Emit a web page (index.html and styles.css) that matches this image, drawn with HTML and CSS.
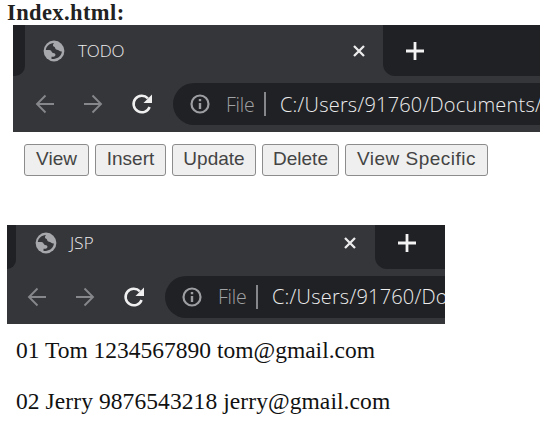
FILE: index.html
```
<!DOCTYPE html>
<html lang="en">
<head>
<meta charset="utf-8">
<title>Index.html</title>
<link rel="stylesheet" href="styles.css">
</head>
<body>
<svg class="defs" width="0" height="0">
  <symbol id="globe" viewBox="0 0 22 22"><circle cx="11" cy="11" r="10.400" fill="#a6a8ab"/><path d="M2.800 10C3.300 6 6.500 3.200 11 2.900 9.500 4.500 9.600 6.300 11.200 6.800c1.200.4.800 2.200 2 2.800 1.200.5 2.200.3 3 1.200.7.7 1.600.8 2.700.7-.4 3.800-3.500 7-7.900 7.400H8.500v-2.200c1.500.2 3.500 0 3.900-1.400.4-1.500-1-2-2.400-2.200-1.500-.3-1.200-2.300-2.700-2.800-1.300-.5-3-.3-4.500-.3z" fill="#35363a"/></symbol>
  <symbol id="back" viewBox="0 0 20 20"><path d="M19 10H2M10.500 1.500 2 10l8.500 8.500" fill="none" stroke="#85878a" stroke-width="1.900"/></symbol>
  <symbol id="forward" viewBox="0 0 20 20"><path d="M1 10h17M9.500 1.500 18 10l-8.500 8.500" fill="none" stroke="#85878a" stroke-width="1.900"/></symbol>
  <symbol id="reload" viewBox="0 0 22 22"><path d="M18.600 14a8.300 8.300 0 1 1-1.700-8.700" fill="none" stroke="#f0f0f1" stroke-width="2.500"/><path d="M21 1.500V10h-8.500z" fill="#f0f0f1"/></symbol>
  <symbol id="info" viewBox="0 0 20 20"><circle cx="10" cy="10" r="8.500" fill="none" stroke="#9c9ea1" stroke-width="2.200"/><path d="M10 9v6M10 5v2.200" stroke="#9c9ea1" stroke-width="2.400"/></symbol>
  <symbol id="close" viewBox="0 0 12 12"><path d="m1 1 10 10M11 1 1 11" stroke="#ececed" stroke-width="2.300"/></symbol>
  <symbol id="plus" viewBox="0 0 18 18"><path d="M9 0v18M0 9h18" stroke="#f3f3f3" stroke-width="2.800"/></symbol>
</svg>
<h1 class="heading">Index.html:</h1>
<section class="browser browser-index">
  <div class="tabs">
    <div class="strip-left"></div>
    <div class="tab"><svg class="globe"><use href="#globe"/></svg><span class="title">TODO</span><svg class="close"><use href="#close"/></svg></div>
    <div class="strip-right"><svg class="plus"><use href="#plus"/></svg></div>
  </div>
  <div class="toolbar">
    <svg class="arrow"><use href="#back"/></svg><svg class="arrow"><use href="#forward"/></svg><svg class="reload"><use href="#reload"/></svg>
    <div class="address"><svg class="info"><use href="#info"/></svg><span class="scheme">File</span><i class="divider"></i><span class="url">C:/Users/91760/Documents/</span></div>
  </div>
</section>
<div class="actions">
  <button class="view">View</button><button class="insert">Insert</button><button class="update">Update</button><button class="delete">Delete</button><button class="specific">View Specific</button>
</div>
<section class="browser browser-jsp">
  <div class="tabs">
    <div class="strip-left"></div>
    <div class="tab"><svg class="globe"><use href="#globe"/></svg><span class="title">JSP</span><svg class="close"><use href="#close"/></svg></div>
    <div class="strip-right"><svg class="plus"><use href="#plus"/></svg></div>
  </div>
  <div class="toolbar">
    <svg class="arrow"><use href="#back"/></svg><svg class="arrow"><use href="#forward"/></svg><svg class="reload"><use href="#reload"/></svg>
    <div class="address"><svg class="info"><use href="#info"/></svg><span class="scheme">File</span><i class="divider"></i><span class="url">C:/Users/91760/Do</span></div>
  </div>
</section>
<div class="records">
  <p class="tom">01 Tom 1234567890 tom@gmail.com</p>
  <p class="jerry">02 Jerry 9876543218 jerry@gmail.com</p>
</div>
</body>
</html>
```
FILE: styles.css
```
* { box-sizing: border-box; }
body { margin: 0; height: 426px; overflow: hidden; background: #fff; color: #111; }
.defs { display: block; }
svg { flex: none; }
.heading { margin: 0; padding: 1px 0 0 7px; height: 25px; font: bold 22.500px/23px "Liberation Serif", serif; color: #222; letter-spacing: .4px; }

.browser { display: flex; flex-direction: column; overflow: hidden; background: #35363a; font-family: "Open Sans", sans-serif; font-weight: 300; color: #ededee; white-space: nowrap; }
.browser-index { width: 527px; height: 107px; margin-left: 13px; }
.browser-jsp { width: 438px; height: 99px; margin-left: 7px; }
.tabs { display: flex; background: #35363a; }
.browser-index .tabs { height: 51px; }
.browser-jsp .tabs { height: 44px; }
.strip-left { width: 12px; background: #202124; border-bottom-right-radius: 10px; }
.browser-jsp .strip-left { width: 9px; }
.tab { display: flex; align-items: center; width: 358px; padding: 0 18px 0 18px; background: #35363a; }
.browser-jsp .tab { width: 359px; padding: 0 19px 8px 19px; }
.globe { width: 22px; height: 22px; }
.title { margin-left: 13px; font-size: 17px; line-height: 22px; letter-spacing: -.1px; }
.browser-jsp .title { letter-spacing: .1px; }
.close { width: 12px; height: 12px; margin-left: auto; }
.strip-right { flex: 1; display: flex; align-items: center; padding-left: 23px; background: #202124; border-bottom-left-radius: 12px; }
.browser-jsp .strip-right { padding: 0 0 8px 23px; }
.plus { width: 18px; height: 18px; }

.toolbar { display: flex; align-items: center; height: 56px; padding-left: 22px; }
.browser-jsp .toolbar { height: 55px; padding-left: 20px; }
.arrow { width: 20px; height: 20px; margin-right: 28px; }
.reload { width: 22px; height: 22px; margin-right: 20px; }
.address { flex: 1; min-width: 0; display: flex; align-items: center; height: 42px; padding-left: 17px; background: #202124; border-radius: 21px 0 0 21px; overflow: hidden; }
.info { width: 20px; height: 20px; }
.scheme { flex: none; margin-left: 16px; width: 30px; color: #a0a2a5; font-size: 19.500px; letter-spacing: -.2px; }
.divider { flex: none; width: 2px; height: 24px; margin: 0 14px 0 8px; background: #85878a; }
.url { font-size: 20px; letter-spacing: .2px; }

.actions { display: flex; gap: 6px; height: 93px; padding: 12px 0 0 24px; }
.actions button { height: 32px; padding: 0 0 2px; border: 1px solid #8c8c8c; border-radius: 3px; background: #efefef; color: #444; font: 19px/28px "Liberation Sans", sans-serif; white-space: nowrap; }
.view { width: 65px; }
.insert { width: 71px; }
.update { width: 84px; }
.delete { width: 77px; }
.actions .specific { width: 143px; letter-spacing: .5px; }

.records { padding: 14px 0 0 16px; font: 23.500px/24px "Liberation Serif", serif; white-space: nowrap; }
.records p { margin: 0 0 27px; }
.records .jerry { letter-spacing: .08px; }
```
